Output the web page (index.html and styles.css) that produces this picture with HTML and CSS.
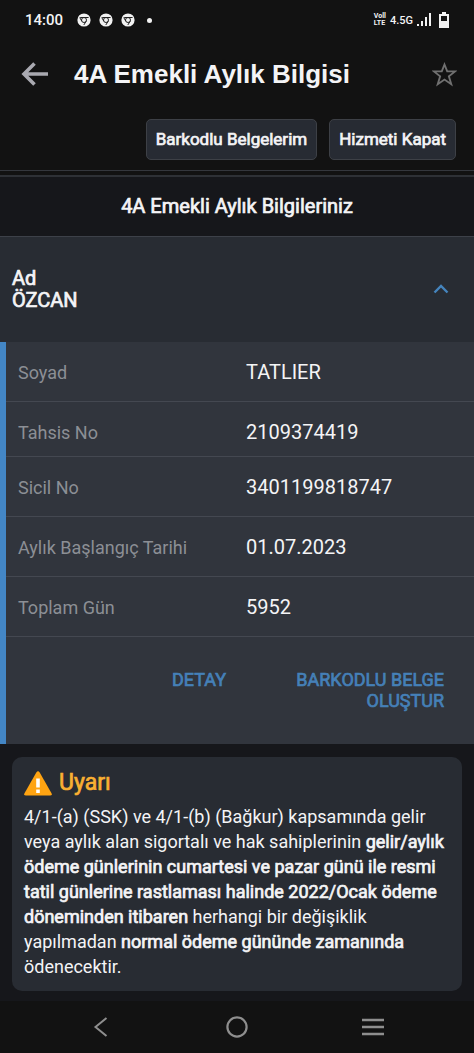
FILE: index.html
```html
<!DOCTYPE html>
<html lang="tr">
<head>
<meta charset="utf-8">
<meta name="viewport" content="width=device-width, initial-scale=1">
<title>4A Emekli Aylık Bilgisi</title>
<link rel="stylesheet" href="styles.css">
</head>
<body>
<div class="screen">
  <svg class="defs" aria-hidden="true">
    <symbol id="browser" viewBox="0 0 14 14">
      <circle cx="7" cy="7" r="6.6" fill="#f2f2f2"/>
      <g fill="none" stroke="#222" stroke-width="1">
        <circle cx="7" cy="7" r="2.5"/>
        <path d="M3.200 4.500h8.400M4.800 8.200 2.700 4.500M9.200 8.200 6.800 12"/>
      </g>
    </symbol>
  </svg>
  <div class="status">
    <div class="status-left">
      <span class="clock">14:00</span>
      <svg class="browser"><use href="#browser"/></svg>
      <svg class="browser"><use href="#browser"/></svg>
      <svg class="browser"><use href="#browser"/></svg>
      <span class="dot"></span>
    </div>
    <div class="status-right">
      <span class="volte"><span>Voll</span><span>LTE</span></span>
      <span class="network">4.5G</span>
      <svg class="signal" viewBox="0 0 15 14" fill="#f2f2f2"><path d="M0 11h2v2H0zM4 8h2v5H4zM8 4h2v9H8zM12 0h2v13h-2z"/></svg>
      <svg class="battery" viewBox="0 0 10 16"><path d="M3 0h4v2h3v14H0V2h3zM2 4v5h6V4z" fill="#f2f2f2" fill-rule="evenodd"/></svg>
    </div>
  </div>

  <header class="appbar">
    <button class="icon-btn" type="button" aria-label="Geri">
      <svg class="back" viewBox="0 0 28 24" fill="none" stroke="#a9a9b0" stroke-width="3.6"><path d="M13.500 1.500 3 12l10.500 10.500M3 12h24"/></svg>
    </button>
    <h1 class="title">4A Emekli Aylık Bilgisi</h1>
    <button class="icon-btn" type="button" aria-label="Favorilere ekle">
      <svg class="star" viewBox="0 0 24 24" fill="none" stroke="#707070" stroke-width="1.8"><path d="M12 2.400 14.600 9h7.600l-6 4.700 2.300 7.700-6.500-4.500-6.500 4.500 2.300-7.700-6-4.700h7.600z"/></svg>
    </button>
  </header>

  <div class="actions">
    <button class="action strong" type="button">Barkodlu Belgelerim</button>
    <button class="action strong" type="button">Hizmeti Kapat</button>
  </div>

  <main class="content">
    <h2 class="section strong">4A Emekli Aylık Bilgileriniz</h2>
    <button class="summary strong" type="button" aria-expanded="true">
      <span class="name"><span>Ad</span><span>ÖZCAN</span></span>
      <svg class="chevron" viewBox="0 0 16 10" fill="none" stroke="#4584bd" stroke-width="2.4"><path d="M1.500 8.500 8 2l6.500 6.500"/></svg>
    </button>
    <section class="details">
      <dl class="rows">
        <div class="row"><dt>Soyad</dt><dd>TATLIER</dd></div>
        <div class="row row-compact"><dt>Tahsis No</dt><dd>2109374419</dd></div>
        <div class="row"><dt>Sicil No</dt><dd>3401199818747</dd></div>
        <div class="row"><dt>Aylık Başlangıç Tarihi</dt><dd>01.07.2023</dd></div>
        <div class="row"><dt>Toplam Gün</dt><dd>5952</dd></div>
      </dl>
      <div class="links">
        <a class="link strong" href="#detay">DETAY</a>
        <a class="link link-create strong" href="#belge">BARKODLU BELGE OLUŞTUR</a>
      </div>
    </section>
    <section class="notice">
      <h3 class="notice-title strong">
        <svg class="warning" viewBox="0 0 28 25"><path d="M12.300 1.500Q14-1 15.700 1.500L27.500 22.200Q28.500 24.500 26 24.500H2Q-.5 24.500.5 22.200Z" fill="#ffa412"/><path d="M12.200 7.500h3.600v9h-3.600zM12.200 18.500h3.600V22h-3.600z" fill="#fff"/></svg>
        <span>Uyarı</span>
      </h3>
      <p class="notice-text">4/1-(a) (SSK) ve 4/1-(b) (Bağkur) kapsamında gelir veya aylık alan sigortalı ve hak sahiplerinin <b class="strong">gelir/aylık ödeme günlerinin cumartesi ve pazar günü ile resmi tatil günlerine rastlaması halinde 2022/Ocak ödeme döneminden itibaren</b> herhangi bir değişiklik yapılmadan <b class="strong">normal ödeme gününde zamanında</b> ödenecektir.</p>
    </section>
  </main>

  <nav class="navbar" aria-label="Sistem">
    <button class="icon-btn" type="button" aria-label="Geri"><svg class="nav-icon" viewBox="0 0 22 22" fill="none" stroke="#8e8e8e" stroke-width="2"><path d="M16.500 2 5.500 11l11 9"/></svg></button>
    <button class="icon-btn" type="button" aria-label="Ana ekran"><svg class="nav-icon" viewBox="0 0 22 22" fill="none" stroke="#8e8e8e" stroke-width="2.200"><circle cx="11" cy="11" r="9.600"/></svg></button>
    <button class="icon-btn" type="button" aria-label="Son uygulamalar"><svg class="nav-icon" viewBox="0 0 22 22" fill="none" stroke="#8e8e8e" stroke-width="2.500"><path d="M0 4h22M0 11h22M0 18h22"/></svg></button>
  </nav>
</div>
</body>
</html>
```
FILE: styles.css
```css
* { box-sizing: border-box; }
body {
  margin: 0;
  background: #121212;
  color: #f4f4f6;
  font-family: Roboto, "Noto Sans", sans-serif;
  font-size: 18px;
}
h1, h2, h3, p, dl, dd { margin: 0; }
button { font-family: inherit; color: inherit; cursor: pointer; }
.screen { min-height: 100vh; display: flex; flex-direction: column; }
.defs { display: none; }
.strong { font-weight: 400; -webkit-text-stroke: 0.7px currentColor; }

.status {
  height: 40px;
  display: flex;
  align-items: center;
  justify-content: space-between;
  padding: 0 25px;
}
.status-left { display: flex; align-items: center; gap: 8px; }
.clock { font-size: 15px; font-weight: 500; margin-right: 6px; }
.browser { width: 14px; height: 14px; }
.dot { width: 5px; height: 5px; margin-left: 4px; border-radius: 50%; background: #f2f2f2; }
.status-right { display: flex; align-items: center; gap: 4px; }
.volte { display: grid; font-size: 7px; line-height: 7px; font-weight: 700; }
.network { font-size: 11px; font-weight: 500; }
.signal { width: 15px; height: 14px; }
.battery { width: 10px; height: 16px; margin-left: 3px; }

.appbar { height: 68px; display: flex; align-items: center; padding: 0 17px 0 21px; }
.icon-btn { display: flex; padding: 0; border: 0; background: none; }
.back { width: 28px; height: 24px; }
.star { width: 25px; height: 25px; }
.title { flex: 1; padding-left: 25px; font: bold 26px/32px "Liberation Sans", Arial, sans-serif; }

.actions { display: flex; justify-content: flex-end; gap: 12px; padding: 11px 18px 10px; border-bottom: 1px solid #34373d; }
.action {
  height: 41px;
  padding: 0 9px 2px;
  border: 1px solid #3d4046;
  border-radius: 5px;
  background: #272b33;
  font-size: 17px;
}

.content { flex: 1; margin-top: 4px; border-top: 2px solid #2e3136; background: #16171b; }
.section { padding: 17px 0; font-size: 20px; line-height: 25px; text-align: center; }
.summary {
  width: 100%;
  height: 106px;
  display: flex;
  align-items: center;
  justify-content: space-between;
  padding: 0 25px 2px 12px;
  border: 0;
  border-top: 1px solid #3d4149;
  background: #282c33;
  text-align: left;
}
.name { display: grid; font-size: 20px; line-height: 22px; }
.chevron { width: 16px; height: 10px; }

.details { border-left: 6px solid #4386c5; background: #31353d; }
.row {
  display: grid;
  grid-template-columns: 228px 1fr;
  padding: 18px 12px 16px;
  border-bottom: 1px solid #444851;
  line-height: 25px;
}
.row-compact { padding-bottom: 11px; }
.row dt { color: #8c8f95; font-size: 18px; }
.row dd { font-size: 20px; }
.links { display: flex; justify-content: flex-end; gap: 60px; padding: 32px 30px 33px; }
.link { color: #4580b8; text-decoration: none; font-size: 18px; line-height: 21px; }
.link-create { width: 158px; text-align: right; }

.notice { margin: 13px 12px 9px; padding: 12px; border-radius: 10px; background: #282c33; }
.notice-title { display: flex; align-items: center; gap: 7px; color: #f9b032; font-size: 23px; line-height: 28px; }
.warning { width: 28px; height: 25px; }
.notice-text { padding-top: 7px; font-size: 18px; line-height: 25px; }

.navbar { height: 52px; display: flex; align-items: center; justify-content: space-between; padding: 0 90px; }
.nav-icon { width: 22px; height: 22px; }
```
